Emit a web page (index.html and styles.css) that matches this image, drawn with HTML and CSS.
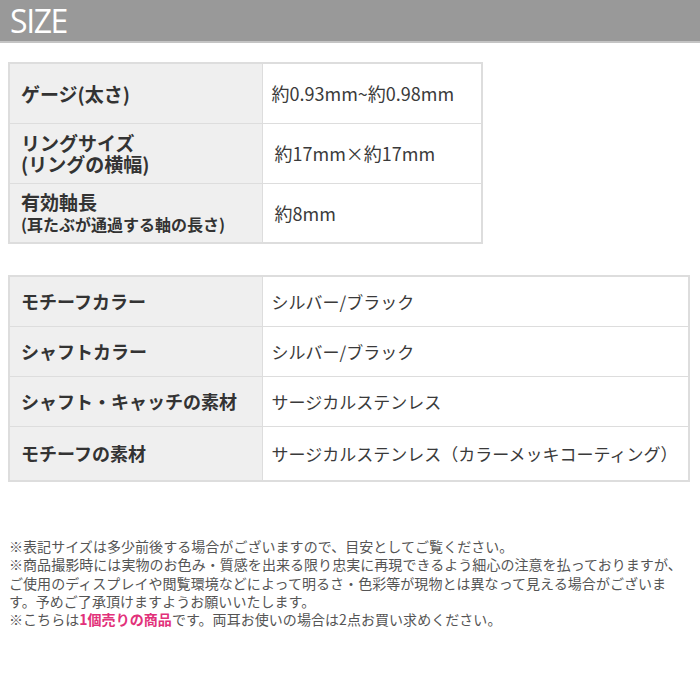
FILE: index.html
```html
<!DOCTYPE html>
<html lang="ja">
<head>
<meta charset="utf-8">
<link rel="stylesheet" href="styles.css">
</head>
<body>
<header class="bar"><h1 class="bar-title">SIZE</h1></header>

<table class="spec spec-size">
  <tr>
    <th class="lbl">ゲージ(太さ)</th>
    <td class="val">約0.93mm~約0.98mm</td>
  </tr>
  <tr>
    <th class="lbl">リングサイズ<br>(リングの横幅)</th>
    <td class="val val-shift">約17mm×約17mm</td>
  </tr>
  <tr>
    <th class="lbl">有効軸長<br><span class="sub">(耳たぶが通過する軸の長さ)</span></th>
    <td class="val val-shift">約8mm</td>
  </tr>
</table>

<table class="spec spec-mat">
  <tr>
    <th class="lbl">モチーフカラー</th>
    <td class="val">シルバー/ブラック</td>
  </tr>
  <tr>
    <th class="lbl">シャフトカラー</th>
    <td class="val">シルバー/ブラック</td>
  </tr>
  <tr>
    <th class="lbl">シャフト・キャッチの素材</th>
    <td class="val">サージカルステンレス</td>
  </tr>
  <tr class="tall">
    <th class="lbl">モチーフの素材</th>
    <td class="val">サージカルステンレス（カラーメッキコーティング）</td>
  </tr>
</table>

<div class="notes">
  <p>※表記サイズは多少前後する場合がございますので、目安としてご覧ください。</p>
  <p>※商品撮影時には実物のお色み・質感を出来る限り忠実に再現できるよう細心の注意を払っておりますが、<br>ご使用のディスプレイや閲覧環境などによって明るさ・色彩等が現物とは異なって見える場合がございま<br>す。予めご了承頂けますようお願いいたします。</p>
  <p>※こちらは<strong class="pink">1個売りの商品</strong>です。両耳お使いの場合は2点お買い求めください。</p>
</div>
</body>
</html>
```

FILE: styles.css
```css
* { box-sizing: border-box; }
html, body { margin: 0; padding: 0; background: #fff; }
body {
  font-family: "Noto Sans CJK JP", "Noto Sans", sans-serif;
  color: #333;
}

.bar {
  height: 43px;
  background: #999999;
  border-bottom: 2px solid #c4c4c4;
  padding-left: 10px;
  overflow: hidden;
}
.bar-title {
  margin: 0;
  font-family: "Open Sans", "Noto Sans", sans-serif;
  font-weight: 400;
  font-size: 32px;
  letter-spacing: -1.4px;
  line-height: 41px;
  color: #fff;
}

.spec {
  border-collapse: collapse;
  margin-left: 8px;
  border: 2px solid #dddddd;
}
.spec th, .spec td {
  border: 1px solid #dddddd;
  padding: 0;
  vertical-align: middle;
  text-align: left;
}
.lbl {
  background: #efefef;
  width: 253px;
  padding-left: 11px !important;
  font-weight: 700;
  color: #333;
}
.val {
  background: #fff;
  padding-left: 9px !important;
  font-weight: 400;
  color: #3a3a3a;
}

.spec-size {
  margin-top: 19px;
  width: 475px;
}
.spec-size td, .spec-size th { height: 60px; }
.spec-size .lbl { font-size: 19px; line-height: 21px; }
.spec-size .sub { font-size: 16px; }
.spec-size .val { font-size: 18px; }
.spec-size .val-shift { padding-left: 12px !important; }

.spec-mat {
  margin-top: 31px;
  width: 682px;
}
.spec-mat td, .spec-mat th { height: 50px; }
.spec-mat .tall td, .spec-mat .tall th { height: 55px; }
.spec-mat .lbl { font-size: 18px; }
.spec-mat .val { font-size: 17px; }

.notes {
  margin-top: 55px;
  padding-left: 9px;
  font-size: 14px;
  line-height: 18.3px;
  letter-spacing: 0.05px;
  color: #555;
  white-space: nowrap;
}
.notes p { margin: 0; }
.pink { color: #e2317a; font-weight: 700; }
```
